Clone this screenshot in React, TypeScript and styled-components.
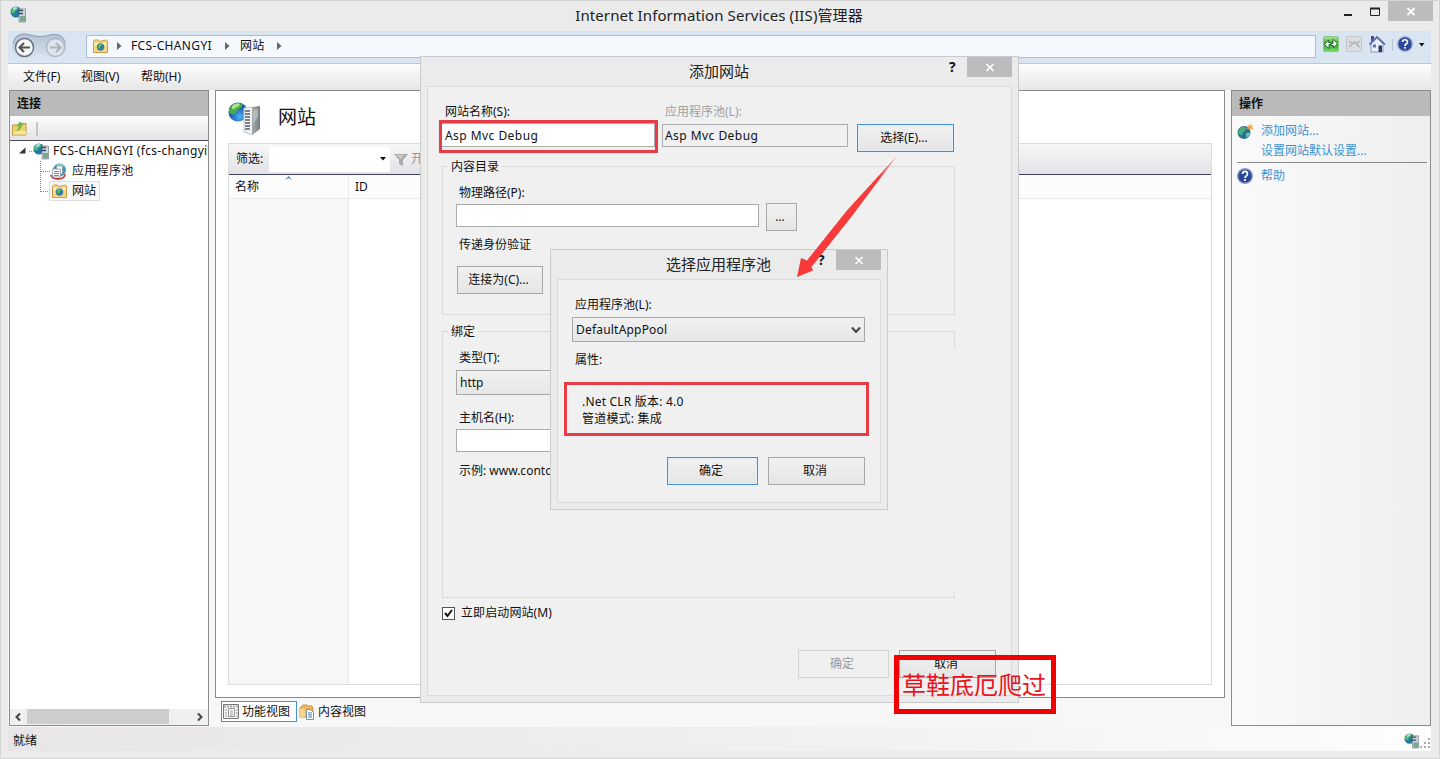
import React from "react";
import styled, { createGlobalStyle, css } from "styled-components";

const App = () => {
  return (
    <>
      <GlobalStyle />
      <Window>
        <TitleBar>
          <TitleIcon>
            <ServerIcon size={17} />
          </TitleIcon>
          <WindowTitle>Internet Information Services (IIS)管理器</WindowTitle>
          <WindowControls />
        </TitleBar>

        <AddressRow>
          <NavButtons />
          <AddressBar>
            <SiteFolderIcon />
            <Crumb $left={9}>
              <Chevron />
            </Crumb>
            <Crumb $left={9}>FCS-CHANGYI</Crumb>
            <Crumb $left={13}>
              <Chevron />
            </Crumb>
            <Crumb $left={10}>网站</Crumb>
            <Crumb $left={12}>
              <Chevron />
            </Crumb>
          </AddressBar>
          <AddressTools />
        </AddressRow>

        <MenuBar>
          <MenuItem $width={58}>文件(F)</MenuItem>
          <MenuItem $width={60}>视图(V)</MenuItem>
          <MenuItem $width={60}>帮助(H)</MenuItem>
        </MenuBar>

        <Body>
          <Connections />
          <Center />
          <Actions />
        </Body>

        <StatusBar>
          <span>就绪</span>
          <StatusRight>
            <ServerIcon size={16} />
            <Grip />
          </StatusRight>
        </StatusBar>
      </Window>

      <AddSiteDialog />
      <PoolDialog />
      <Arrow />
      <Stamp>草鞋底厄爬过</Stamp>
    </>
  );
};

export default App;

const Connections = () => (
  <SidePanel>
    <PanelHead>连接</PanelHead>
    <PanelTools>
      <ConnectIcon />
      <ToolDivider />
    </PanelTools>
    <Tree>
      <TreeRow $indent={9}>
        <TreeLines width="15" height="20">
          <path d="M6.500 6.500v6H0z" fill="#333" />
          <path d="M10 10.5h5" stroke="#999" strokeDasharray="1 1" />
        </TreeLines>
        <ServerIcon size={17} />
        <TreeText $left={3}>FCS-CHANGYI (fcs-changyi\</TreeText>
      </TreeRow>
      <TreeRow $indent={30}>
        <TreeLines width="11" height="20">
          <path
            d="M.5 0v20M1 10.5h10"
            stroke="#888"
            strokeDasharray="1 1"
            fill="none"
          />
        </TreeLines>
        <PoolIcon />
        <TreeText $left={5}>应用程序池</TreeText>
      </TreeRow>
      <TreeRow $indent={30}>
        <TreeLines width="9" height="20">
          <path
            d="M.5 0v11M1 10.5h8"
            stroke="#888"
            strokeDasharray="1 1"
            fill="none"
          />
        </TreeLines>
        <Selected>
          <SiteFolderIcon />
          <span>网站</span>
        </Selected>
      </TreeRow>
    </Tree>
    <ScrollBar>
      <svg width="17" height="16">
        <path d="M10 4.5L6.5 8l3.500 3.500" stroke="#444" strokeWidth="2" fill="none" />
      </svg>
      <ScrollThumb />
      <svg width="17" height="16">
        <path d="M7 4.500L10.500 8L7 11.500" stroke="#444" strokeWidth="2" fill="none" />
      </svg>
    </ScrollBar>
  </SidePanel>
);

const Center = () => (
  <CenterColumn>
    <FeaturePanel>
      <FeatureHead>
        <BigServerIcon />
        <FeatureTitle>网站</FeatureTitle>
      </FeatureHead>
      <ListBox>
        <FilterBar>
          <FilterLabel>筛选:</FilterLabel>
          <FilterInput>
            <Caret />
          </FilterInput>
          <svg width="18" height="20" viewBox="0 0 18 20">
            <path d="M4 5h14l-5 6v6l-4-2v-4z" fill="#aaa" />
            <path d="M6 6h8l-3 4" fill="#ccc" />
          </svg>
          <FilterGo>开始(G)</FilterGo>
        </FilterBar>
        <Columns>
          <NameColumn>
            <ColumnHead $left={6}>名称</ColumnHead>
            <SortMark width="8" height="5">
              <path d="M0 4l3.500-4l3.500 4l-3.500-2z" fill="#3f7fae" />
            </SortMark>
          </NameColumn>
          <RestColumn>
            <ColumnHead $left={6}>ID</ColumnHead>
          </RestColumn>
        </Columns>
      </ListBox>
    </FeaturePanel>
    <ViewTabs>
      <ViewTab $active>
        <FeatureViewIcon />
        功能视图
      </ViewTab>
      <ViewTab>
        <ContentViewIcon />
        内容视图
      </ViewTab>
    </ViewTabs>
  </CenterColumn>
);

const Actions = () => (
  <ActionPanel>
    <PanelHead>操作</PanelHead>
    <ActionList>
      <ActionRow>
        <GlobeIcon />
        添加网站...
      </ActionRow>
      <ActionRow $plain>设置网站默认设置...</ActionRow>
      <ActionLine />
      <ActionRow>
        <HelpIcon />
        帮助
      </ActionRow>
    </ActionList>
  </ActionPanel>
);

const AddSiteDialog = () => (
  <SiteDialog>
    <DialogTitle>
      添加网站
      <DialogControls />
    </DialogTitle>
    <DialogBody>
      <Row $left={17} $top={17}>
        <Label $width={220}>网站名称(S):</Label>
        <Label $muted>应用程序池(L):</Label>
      </Row>
      <Row $left={11} $top={-2}>
        <RedFrame>
          <FramedInput>Asp Mvc Debug</FramedInput>
        </RedFrame>
        <PoolField>Asp Mvc Debug</PoolField>
        <ChooseButton $width={97} $focus>
          选择(E)...
        </ChooseButton>
      </Row>
      <Group $height={149} $top={13}>
        <Legend>内容目录</Legend>
        <Stack>
          <GroupLabel>物理路径(P):</GroupLabel>
          <PathRow>
            <Field $width={303} />
            <Button $width={31}>...</Button>
          </PathRow>
          <GroupLabel $top={4}>传递身份验证</GroupLabel>
          <ConnectButton $width={86}>连接为(C)...</ConnectButton>
        </Stack>
      </Group>
      <Group $height={267} $top={16} $broken>
        <Legend>绑定</Legend>
        <Stack>
          <GroupLabel>类型(T):</GroupLabel>
          <TypeSelect>http</TypeSelect>
          <GroupLabel $top={13}>主机名(H):</GroupLabel>
          <HostField $width={303} />
          <GroupLabel $top={9}>示例: www.contoso.com</GroupLabel>
        </Stack>
      </Group>
      <CheckRow>
        <CheckBox>
          <svg width="11" height="11">
            <path d="M2 5l2.500 3L9 2" stroke="#111" strokeWidth="2" fill="none" />
          </svg>
        </CheckBox>
        立即启动网站(M)
      </CheckRow>
      <DialogButtons $top={29}>
        <Button $width={91} $disabled>
          确定
        </Button>
        <Button $width={97}>取消</Button>
      </DialogButtons>
    </DialogBody>
  </SiteDialog>
);

const PoolDialog = () => (
  <PoolWindow>
    <DialogTitle>
      选择应用程序池
      <DialogControls />
    </DialogTitle>
    <DialogBody>
      <Row $left={17} $top={17}>
        <Label>应用程序池(L):</Label>
      </Row>
      <PoolSelect>
        DefaultAppPool
        <svg width="10" height="8">
          <path d="M1 1.500L5 6l4-4.500" stroke="#444" strokeWidth="2" fill="none" />
        </svg>
      </PoolSelect>
      <Row $left={17} $top={10}>
        <Label>属性:</Label>
      </Row>
      <RedInfo>
        <span>.Net CLR 版本: 4.0</span>
        <span>管道模式: 集成</span>
      </RedInfo>
      <DialogButtons $top={21}>
        <Button $width={91} $focus>
          确定
        </Button>
        <Button $width={97}>取消</Button>
      </DialogButtons>
    </DialogBody>
  </PoolWindow>
);

const DialogControls = () => (
  <DialogTools>
    <HelpMark>?</HelpMark>
    <CloseBox>
      <svg width="10" height="9">
        <path d="M1.500 1l7 7M8.500 1l-7 7" stroke="#fff" strokeWidth="1.600" />
      </svg>
    </CloseBox>
  </DialogTools>
);

const WindowControls = () => (
  <Controls>
    <svg width="44" height="21">
      <path d="M0 14h8" stroke="#222" strokeWidth="2" />
      <path d="M26.500 8v6.500h9V8" stroke="#222" strokeWidth="1" fill="none" />
      <path d="M26 7.500h10" stroke="#222" strokeWidth="2" />
    </svg>
    <CloseBox>
      <svg width="10" height="9">
        <path d="M1.500 1l7 7M8.500 1l-7 7" stroke="#fff" strokeWidth="1.800" />
      </svg>
    </CloseBox>
  </Controls>
);

const NavButtons = () => (
  <svg width="78" height="33" viewBox="8 31 78 33">
    <defs>
      <linearGradient id="nav" x1="0" y1="0" x2="0" y2="1">
        <stop offset="0" stopColor="#b3c1d3" />
        <stop offset="1" stopColor="#d6e2ef" />
      </linearGradient>
    </defs>
    <path
      d="M12 46C13 36 18 33 24 33.500C32 34 32 36 40 36C48 36 48 34 55 34C63 34 67 40 66 48C65 55 60 58 55 58C46 58 46 54 40 54C34 54 34 59 24 58C16 57 12 53 12 46z"
      fill="url(#nav)"
    />
    <path d="M13 43C16 34 24 33 30 35C38 37 44 37 50 35C58 33 64 37 65 43" stroke="#8f9fb4" fill="none" />
    <circle cx="24.500" cy="47.500" r="9" fill="#f6f8fa" stroke="#687482" strokeWidth="1.500" />
    <path d="M30 47.500H20M24 43l-4.500 4.500l4.500 4.500" stroke="#555" strokeWidth="2.200" fill="none" />
    <circle cx="55.500" cy="47.500" r="9" fill="#dfe4ea" stroke="#aab4c0" strokeWidth="1.300" />
    <path d="M50 47.500h10M56 43l4.500 4.500l-4.500 4.500" stroke="#aeb4bc" strokeWidth="2.200" fill="none" />
  </svg>
);

const AddressTools = () => (
  <svg width="115" height="33" viewBox="1316 31 115 33">
    <defs>
      <linearGradient id="green" x1="0" y1="0" x2="0" y2="1">
        <stop offset="0" stopColor="#b4e6a4" />
        <stop offset=".5" stopColor="#2f9a2e" />
        <stop offset="1" stopColor="#74e062" />
      </linearGradient>
    </defs>
    <rect x="1323.500" y="36.500" width="15" height="15" rx="1" fill="url(#green)" stroke="#8cc784" />
    <path
      d="M1324.500 44.500l4-4.500v2.500h2.500v2h-2v4zM1337.500 43.500l-4 4.500v-2.500h-2.500v-2h2v-4z"
      fill="#fff"
      stroke="#176b1c"
      strokeWidth=".9"
    />
    <rect x="1346.500" y="36.500" width="15" height="15" rx="1" fill="#dcdde0" stroke="#c2c5ca" />
    <path d="M1349 47l5.500-5l5 5M1349.500 41l3.500 3M1359.500 41l-3.500 3" stroke="#b0b2b6" strokeWidth="1.600" fill="none" />
    <path d="M1371 44l6-6l6 6v8h-12z" fill="#e9eef9" stroke="#8b96bd" />
    <path d="M1371 36h3v5h-3z" fill="#3f4c9a" />
    <path d="M1369.500 44.500l7.500-7.500l8 7.500" stroke="#6273a9" strokeWidth="1.800" fill="none" />
    <path d="M1378.500 45.500h3.500v6.500h-3.500z" fill="#2c3a66" />
    <path d="M1373 44.500h3v3h-3z" fill="#5775b5" />
    <path d="M1392.500 39v12" stroke="#b9c6d5" />
    <circle cx="1405" cy="44" r="7.200" fill="#2a479c" stroke="#8b9cc4" strokeWidth="1.300" />
    <path d="M1402.500 42c0-3 5-3 5 0c0 2-2.500 2-2.500 4M1405 47v1.800" stroke="#fff" strokeWidth="1.700" fill="none" />
    <path d="M1419 43h5.500l-2.750 3.500z" fill="#111" />
  </svg>
);

const ServerIcon = ({ size }: { size: number }) => (
  <svg width={size} height={size} viewBox="0 0 17 17">
    <circle cx="6" cy="6" r="5.500" fill="#2379a8" />
    <path d="M2 3C5 0 9 1 8 3C7 5 5 4 5 6C4 9 1 7 1 5z" fill="#55b86c" />
    <path d="M3 2c2-1.500 4-1 4 0S4 4 3 4z" fill="#b7e5d4" />
    <path d="M9 3h6.500v13H9z" fill="#cfd8d9" stroke="#71858c" strokeWidth=".7" />
    <path d="M8 4.500h5M8 7.500h5" stroke="#344e6b" strokeWidth="1.300" />
    <path d="M10 10h5v5.500h-5z" fill="#7da48e" />
  </svg>
);

const BigServerIcon = () => (
  <svg width="34" height="34" viewBox="0 0 34 34">
    <defs>
      <radialGradient id="globe" cx=".6" cy=".75" r=".8">
        <stop offset="0" stopColor="#4fb2f3" />
        <stop offset=".6" stopColor="#1c5cb8" />
        <stop offset="1" stopColor="#174690" />
      </radialGradient>
      <linearGradient id="case">
        <stop offset="0" stopColor="#a6acae" />
        <stop offset="1" stopColor="#767d80" />
      </linearGradient>
    </defs>
    <circle cx="10" cy="10" r="9.500" fill="url(#globe)" />
    <path d="M2 5C6 0 13 0 15 3C13 7 9 7 8 11C4 14 1 12 1 8z" fill="#4aab48" />
    <path d="M5 3C8 1 12 1 12 3C10 5 8 5 6 7C4 8 3 6 5 3z" fill="#a5e58b" />
    <path d="M16 6l9-1v28l-9-3z" fill="#eff1f2" stroke="#c3c8ca" />
    <path d="M24 5l8-1v23l-8 6z" fill="url(#case)" />
    <path
      d="M17 9h5M17 12h5M17 15h5M17 18h5M17 21h5M17 24h5M17 27h5"
      stroke="#576066"
      strokeWidth="1.300"
    />
    <path d="M25 8l5-1v7l-5 9z" fill="#c2c7c9" opacity=".7" />
  </svg>
);

const SiteFolderIcon = () => (
  <svg width="15" height="14" viewBox="0 0 15 14">
    <path d="M.5 2.500l1-1.500h4l1 1.500L13 1l1.500 1v11.500H.5z" fill="#f7d783" stroke="#c99b47" />
    <path d="M1 4h13v2H1z" fill="#fdf0b8" />
    <circle cx="7.500" cy="8" r="3.700" fill="#2e7ea6" />
    <path d="M5 7c1-3 4-2 4-1s-2 1-2 3s-2 0-2-2z" fill="#65bb51" />
  </svg>
);

const PoolIcon = () => (
  <svg width="17" height="17" viewBox="0 0 17 17">
    <circle cx="9.500" cy="7" r="6.500" fill="#3d9cb2" />
    <path d="M6 2C9 0 12 1 14 3L11 6z" fill="#8edfc9" />
    <path d="M1 12C1 17 15 18 15 11" stroke="#c8444b" strokeWidth="1.800" fill="none" />
    <path d="M6.500 3h6v8h-6z" fill="#fff" stroke="#8793a2" strokeWidth=".8" />
    <path d="M2.500 6h8v8h-8z" fill="#fff" stroke="#8793a2" strokeWidth=".8" />
    <path d="M4 8.500h5M4 10.500h5M4 12.500h5" stroke="#778" strokeWidth=".9" />
  </svg>
);

const ConnectIcon = () => (
  <svg width="15" height="15" viewBox="0 0 15 15">
    <path d="M.5 4h5l1-1.500h7.500V14H.5z" fill="#efcf67" stroke="#b59a42" />
    <path d="M1 10h13v3.500H1z" fill="#f9e69a" />
    <path d="M1.500 10.500C6 10 7 7 6.500 5L4.500 5.500L8 .5l4 3.500l-2.500.5C10 8 6 11 1.500 10.500z" fill="#6dbb45" />
  </svg>
);

const GlobeIcon = () => (
  <svg width="17" height="17" viewBox="0 0 17 17">
    <circle cx="7" cy="9.500" r="6.500" fill="#28708f" />
    <path d="M2 7C5 2 9 4 9 6C8 9 6 8 5 12C2 12 0 10 2 7z" fill="#4bb07a" />
    <path d="M9 11c2-3 4-1 4 0s-3 4-4 3z" fill="#63c7b0" />
    <path d="M13 .5l1 2.200l2.500-.5L15 4l1.500 2l-2.500-.3L13 8l-1-2.300L9.500 6L11 4L9.500 2.200l2.500.5z" fill="#f3a84c" />
  </svg>
);

const HelpIcon = () => (
  <svg width="17" height="17" viewBox="0 0 17 17">
    <circle cx="8" cy="8" r="7.300" fill="#2b4699" stroke="#8d9ac3" strokeWidth="1.400" />
    <path d="M5.500 6c0-3.500 5-3.500 5 0c0 2-2.500 2-2.500 4M8 11v2" stroke="#fff" strokeWidth="1.700" fill="none" />
  </svg>
);

const FeatureViewIcon = () => (
  <svg width="17" height="16" viewBox="0 0 17 16">
    <path d="M.5.5h15v14H.5z" fill="#f5f5f5" stroke="#777" />
    <path d="M1 2.500h14" stroke="#aaa" strokeWidth="2" strokeDasharray="2 1" />
    <path d="M5.500 4.500h6v8h-6z" fill="#fff" stroke="#999" />
    <path d="M7 7h3M7 9h3M7 11h3M2 6h2M2 9h2M2 12h2M13 6h2M13 9h2M13 12h2" stroke="#999" />
  </svg>
);

const ContentViewIcon = () => (
  <svg width="17" height="16" viewBox="0 0 17 16">
    <path d="M1 4l3-3h4l1 1h4l1 2v9H1z" fill="#eeb85c" stroke="#c8963f" />
    <path d="M1 5h5v8H1z" fill="#f8d58a" />
    <path d="M7.500 5.500h4l3 3v7h-7z" fill="#fff" stroke="#7890a8" />
    <path d="M9 9h4M9 11h4M9 13h4" stroke="#4a7da8" />
  </svg>
);

const Chevron = () => (
  <svg width="5" height="8">
    <path d="M0 0l4.500 4L0 8z" fill="#666" />
  </svg>
);

const Caret = () => (
  <svg width="6" height="4">
    <path d="M0 0h6L3 3.500z" fill="#111" />
  </svg>
);

const Grip = () => (
  <svg width="11" height="11">
    <path d="M8 0h2v2h-2zM4 4h2v2h-2zM8 4h2v2h-2zM0 8h2v2H0zM4 8h2v2h-2zM8 8h2v2h-2z" fill="#aaa" />
  </svg>
);

const Arrow = () => (
  <ArrowLayer width="106" height="126" viewBox="794 153 106 126">
    <defs>
      <linearGradient id="fade" x1="1" y1="0" x2="0" y2="1">
        <stop offset="0" stopColor="#f83a3a" stopOpacity=".3" />
        <stop offset=".2" stopColor="#f83a3a" />
      </linearGradient>
    </defs>
    <path
      d="M898.500 154L852 216L811.500 267L813 270.500L797 277L801 258L807 260.500L846.500 211z"
      fill="url(#fade)"
    />
  </ArrowLayer>
);

const GlobalStyle = createGlobalStyle`
  * {
    box-sizing: border-box;
  }
  body {
    margin: 0;
    overflow: hidden;
    color: #111;
    font-family: "Noto Sans", "Noto Sans CJK SC", sans-serif;
    font-size: 12px;
    line-height: 16px;
    white-space: nowrap;
  }
  svg {
    display: block;
    flex-shrink: 0;
  }
`;

const Window = styled.div`
  display: flex;
  flex-direction: column;
  width: 1440px;
  height: 759px;
  padding: 0 8px 7px 7px;
  background: #ebebeb;
  border: 1px solid #d4d4d4;
`;

const TitleBar = styled.header`
  display: flex;
  justify-content: space-between;
  height: 30px;
`;

const TitleIcon = styled.div`
  width: 86px;
  padding: 5px 0 0 2px;
`;

const WindowTitle = styled.h1`
  margin: 0;
  padding: 4px 0 0 0;
  font-size: 15px;
  font-weight: 400;
  line-height: 21px;
  letter-spacing: 0.1px;
  color: #222;
`;

const Controls = styled.div`
  display: flex;
  width: 89px;
  margin-right: -2px;
`;

const AddressRow = styled.div`
  display: flex;
  height: 33px;
  flex-shrink: 0;
  background: #d9e5f1;
  border-bottom: 1px solid #b9c9d9;
`;

const AddressBar = styled.div`
  display: flex;
  align-items: center;
  flex: 1;
  height: 23px;
  margin-top: 4px;
  padding: 0 0 1px 6px;
  background: #f5f9fd;
  border: 1px solid #a9bed6;
`;

const Crumb = styled.span<{ $left: number }>`
  margin-left: ${({ $left }) => $left}px;
  letter-spacing: 0.35px;
`;

const MenuBar = styled.nav`
  display: flex;
  align-items: center;
  height: 26px;
  flex-shrink: 0;
  padding-left: 15px;
  background: linear-gradient(#fdfdfd, #e6e6e6);
`;

const MenuItem = styled.span<{ $width: number }>`
  width: ${({ $width }) => $width}px;
`;

const Body = styled.main`
  display: flex;
  flex: 1;
  min-height: 0;
  padding-left: 1px;
  background: #f7f7f7;
`;

const SidePanel = styled.section`
  display: flex;
  flex-direction: column;
  width: 200px;
  height: 636px;
  background: #fff;
  border: 1px solid #8b8b8b;
`;

const PanelHead = styled.h2`
  height: 25px;
  margin: 0;
  padding: 4px 0 0 7px;
  background: #bababa;
  font-size: 12px;
  font-weight: 700;
  line-height: 17px;
`;

const PanelTools = styled.div`
  display: flex;
  align-items: center;
  height: 25px;
  padding: 0 2px;
  background: linear-gradient(#fcfcfc, #e4e4e4);
  border-bottom: 1px solid #4c4c68;
`;

const ToolDivider = styled.i`
  width: 2px;
  height: 14px;
  margin: 2px 0 0 9px;
  background: #c4c4c4;
`;

const Tree = styled.div`
  flex: 1;
  overflow: hidden;
`;

const TreeRow = styled.div<{ $indent: number }>`
  display: flex;
  align-items: center;
  height: 20px;
  padding-left: ${({ $indent }) => $indent}px;
`;

const TreeLines = styled.svg`
  margin-right: -1px;
`;

const TreeText = styled.span<{ $left: number }>`
  margin-left: ${({ $left }) => $left}px;
  letter-spacing: 0.3px;
`;

const Selected = styled.div`
  display: flex;
  align-items: center;
  gap: 5px;
  width: 51px;
  height: 20px;
  margin-left: 1px;
  padding-left: 2px;
  background: #f7f7f7;
  border: 1px solid #dedede;
`;

const ScrollBar = styled.div`
  display: flex;
  justify-content: space-between;
  height: 16px;
  background: #f0f0f0;
`;

const ScrollThumb = styled.i`
  width: 142px;
  height: 15px;
  margin-right: auto;
  background: #cdcdcd;
`;

const CenterColumn = styled.section`
  display: flex;
  flex-direction: column;
  width: 1010px;
  margin: 0 6px;
`;

const FeaturePanel = styled.div`
  height: 608px;
  padding: 0 12px;
  background: #fff;
  border: 1px solid #8b8b8b;
`;

const FeatureHead = styled.div`
  display: flex;
  height: 52px;
  padding-top: 11px;
`;

const FeatureTitle = styled.h2`
  margin: 3px 0 0 16px;
  font-size: 19px;
  font-weight: 400;
  line-height: 24px;
`;

const ListBox = styled.div`
  display: flex;
  flex-direction: column;
  height: 542px;
  border: 1px solid #dcdcdc;
`;

const FilterBar = styled.div`
  display: flex;
  align-items: center;
  height: 31px;
  background: linear-gradient(#f7f7f7, #e2e2e5);
  border-bottom: 1px solid #40405c;
`;

const FilterLabel = styled.span`
  width: 40px;
  padding-left: 7px;
`;

const FilterInput = styled.div`
  display: flex;
  align-items: center;
  justify-content: flex-end;
  width: 121px;
  height: 25px;
  padding-right: 4px;
  background: #fff;
`;

const FilterGo = styled.span`
  margin-left: 3px;
  color: #999;
`;

const Columns = styled.div`
  display: flex;
  flex: 1;
`;

const NameColumn = styled.div`
  position: relative;
  width: 120px;
  background: #f7f7f7;
  border-right: 1px solid #e9e9e9;
`;

const RestColumn = styled.div`
  flex: 1;
`;

const ColumnHead = styled.div<{ $left: number }>`
  height: 24px;
  padding: 4px 0 0 ${({ $left }) => $left}px;
  background: #fcfcfc;
  border-bottom: 1px solid #e9e9e9;
`;

const SortMark = styled.svg`
  position: absolute;
  top: 1px;
  left: 56px;
`;

const ViewTabs = styled.div`
  display: flex;
  padding: 3px 0 0 6px;
`;

const ViewTab = styled.div<{ $active?: boolean }>`
  display: flex;
  align-items: center;
  gap: 2px;
  height: 21px;
  padding: 0 5px 0 1px;
  border: 1px solid ${({ $active }) => ($active ? "#4b8fce" : "transparent")};
  ${({ $active }) =>
    $active &&
    css`
      width: 76px;
      padding-right: 0;
      background: #fff;
    `}
`;

const ActionPanel = styled.section`
  width: 200px;
  height: 636px;
  background: linear-gradient(90deg, #fafafa, #eee);
  border: 1px solid #8b8b8b;
`;

const ActionList = styled.div`
  display: flex;
  flex-direction: column;
  padding: 5px 3px 0 5px;
`;

const ActionRow = styled.div<{ $plain?: boolean }>`
  display: flex;
  align-items: center;
  gap: 7px;
  height: 20px;
  padding-left: ${({ $plain }) => ($plain ? 24 : 0)}px;
  color: #3d92d0;
`;

const ActionLine = styled.i`
  height: 1px;
  margin: 1px 0 3px;
  background: #888;
`;

const StatusBar = styled.footer`
  display: flex;
  align-items: center;
  justify-content: space-between;
  height: 24px;
  flex-shrink: 0;
  padding: 3px 0 0 5px;
  background: linear-gradient(90deg, #e7e5e5, #f1f1f1 60%, #fdfdfd);
`;

const StatusRight = styled.div`
  display: flex;
  align-items: flex-end;
`;

const dialogFrame = css`
  position: absolute;
  display: flex;
  flex-direction: column;
  padding: 0 6px 6px;
  background: #ebebeb;
  border: 1px solid #c9cccf;
  overflow: hidden;
`;

const SiteDialog = styled.section`
  ${dialogFrame}
  top: 56px;
  left: 420px;
  width: 599px;
  height: 647px;
`;

const PoolWindow = styled.section`
  ${dialogFrame}
  top: 249px;
  left: 550px;
  width: 338px;
  height: 261px;
`;

const DialogTitle = styled.div`
  position: relative;
  height: 29px;
  flex-shrink: 0;
  padding: 4px 1px 0 0;
  color: #222;
  font-size: 15px;
  line-height: 21px;
  text-align: center;
`;

const DialogTools = styled.div`
  position: absolute;
  top: 0;
  right: 0;
  display: flex;
`;

const HelpMark = styled.b`
  width: 18px;
  font-family: "Open Sans", sans-serif;
  font-size: 14px;
  line-height: 20px;
  text-align: left;
  color: #111;
`;

const CloseBox = styled.div`
  display: flex;
  align-items: center;
  justify-content: center;
  width: 45px;
  height: 20px;
  background: #bcbcbc;
`;

const DialogBody = styled.div`
  flex: 1;
  background: #f0f0f0;
  border: 1px solid #dadada;
`;

const Row = styled.div<{ $left: number; $top: number }>`
  display: flex;
  margin-top: ${({ $top }) => $top}px;
  padding-left: ${({ $left }) => $left}px;
`;

const Label = styled.span<{ $width?: number; $muted?: boolean }>`
  width: ${({ $width }) => ($width ? `${$width}px` : "auto")};
  height: 18px;
  color: ${({ $muted }) => ($muted ? "#a0a0a0" : "#111")};
`;

const RedFrame = styled.div`
  width: 219px;
  height: 33px;
  border: 3px solid #e63d47;
`;

const fieldBox = css`
  padding: 3px 0 0 3px;
  background: #fff;
  border: 1px solid #ababab;
`;

const FramedInput = styled.div`
  ${fieldBox}
  width: 213px;
  height: 24px;
  border-left: 0;
  letter-spacing: 0.45px;
  line-height: 17px;
`;

const PoolField = styled.div`
  ${fieldBox}
  width: 186px;
  height: 23px;
  margin: 4px 0 0 4px;
  padding-left: 2px;
  background: #f0f0f0;
  letter-spacing: 0.45px;
`;

const Button = styled.div<{
  $width: number;
  $focus?: boolean;
  $disabled?: boolean;
}>`
  display: flex;
  align-items: center;
  justify-content: center;
  width: ${({ $width }) => $width}px;
  height: 28px;
  padding-right: 3px;
  background: linear-gradient(#f1f1f1, #e5e5e5);
  border: 1px solid #a8a8a8;
  ${({ $focus }) =>
    $focus &&
    css`
      border-color: #4590d6;
      box-shadow: inset 0 0 0 1px #e0eefa;
    `}
  ${({ $disabled }) =>
    $disabled &&
    css`
      background: #efefef;
      border-color: #d4d4d4;
      color: #9a9a9a;
    `}
`;

const ChooseButton = styled(Button)`
  margin: 4px 0 0 9px;
`;

const Group = styled.div<{ $height: number; $top: number; $broken?: boolean }>`
  width: 513px;
  height: ${({ $height }) => $height}px;
  margin: ${({ $top }) => $top}px 0 0 14px;
  border: 1px solid #dadada;
  ${({ $broken }) =>
    $broken &&
    css`
      border-right: 0;
      background: linear-gradient(#dadada, #dadada) right top / 1px 17px
          no-repeat,
        linear-gradient(#dadada, #dadada) right bottom / 1px 5px no-repeat;
    `}
`;

const Legend = styled.span`
  display: block;
  width: fit-content;
  height: 16px;
  margin: -8px 0 0 5px;
  padding: 0 3px;
  background: #f0f0f0;
`;

const Stack = styled.div`
  padding: 8px 0 0 13px;
`;

const GroupLabel = styled.div<{ $top?: number }>`
  height: 20px;
  margin-top: ${({ $top }) => $top ?? 0}px;
  padding: 2px 0 0 3px;
`;

const PathRow = styled.div`
  display: flex;
  gap: 7px;
`;

const Field = styled.div<{ $width: number }>`
  ${fieldBox}
  width: ${({ $width }) => $width}px;
  height: 23px;
  margin-top: 1px;
`;

const HostField = styled(Field)`
  margin-top: 1px;
`;

const ConnectButton = styled(Button)`
  margin: 11px 0 0 1px;
`;

const selectBox = css`
  height: 25px;
  background: linear-gradient(#f1f1f1, #e6e6e6);
  border: 1px solid #a8a8a8;
`;

const TypeSelect = styled.div`
  ${selectBox}
  width: 130px;
  margin-top: 2px;
  padding: 4px 0 0 3px;
`;

const CheckRow = styled.div`
  display: flex;
  align-items: center;
  gap: 6px;
  height: 16px;
  margin: 7px 0 0 14px;
  letter-spacing: 0.1px;
`;

const CheckBox = styled.div`
  width: 13px;
  height: 13px;
  background: #fff;
  border: 1px solid #555;
`;

const DialogButtons = styled.div<{ $top: number }>`
  display: flex;
  justify-content: flex-end;
  gap: 10px;
  margin-top: ${({ $top }) => $top}px;
  padding-right: 15px;
`;

const PoolSelect = styled.div`
  ${selectBox}
  display: flex;
  align-items: center;
  justify-content: space-between;
  width: 293px;
  margin: 2px 0 0 14px;
  padding: 0 3px;
  letter-spacing: 0.2px;
`;

const RedInfo = styled.div`
  display: flex;
  flex-direction: column;
  width: 305px;
  height: 54px;
  margin: 12px 0 0 6px;
  padding: 8px 0 0 15px;
  border: 3px solid #e63d47;
  letter-spacing: 0.2px;
  line-height: 17px;
`;

const ArrowLayer = styled.svg`
  position: absolute;
  top: 153px;
  left: 794px;
`;

const Stamp = styled.div`
  position: absolute;
  top: 655px;
  left: 894px;
  width: 162px;
  height: 59px;
  padding-left: 3px;
  border: 5px solid #f00000;
  color: #e8141c;
  font-size: 24px;
  line-height: 50px;
`;
